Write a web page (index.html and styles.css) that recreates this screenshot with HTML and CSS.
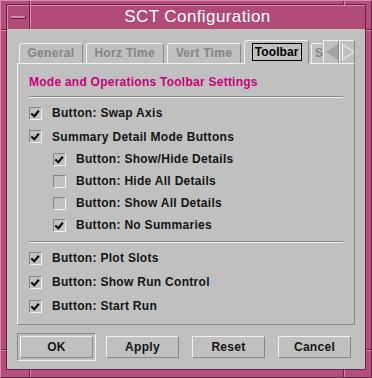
FILE: index.html
```html
<!DOCTYPE html>
<html lang="en">

<head>
    <meta charset="UTF-8">
    <title>SCT Configuration</title>
    <link rel="stylesheet" href="styles.css">
</head>

<body>
    <div class="window">
        <span class="tick top t-left"></span>
        <span class="tick top t-right"></span>
        <span class="tick bottom t-left"></span>
        <span class="tick bottom t-right"></span>
        <span class="tick side s-left s-up"></span>
        <span class="tick side s-left s-down"></span>
        <span class="tick side s-right s-up"></span>
        <span class="tick side s-right s-down"></span>

        <div class="titlebar">
            <div class="menu-btn"><span class="dash"></span></div>
            <div class="title">SCT Configuration</div>
        </div>
        <div class="client">
            <div class="tabs">
                <div class="tab t-general">General</div>
                <div class="tab t-horz">Horz Time</div>
                <div class="tab t-vert">Vert Time</div>
                <div class="tab active"><span class="focus">Toolbar</span></div>
                <div class="tab cut">S</div>
                <div class="scroll">
                    <span class="arrow">
                        <svg width="16" height="22" viewBox="0 0 16 22"><polygon points="14,3 2,11 14,19" fill="#a3a3a3" /></svg>
                    </span>
                    <span class="arrow">
                        <svg width="16" height="22" viewBox="0 0 16 22"><polyline points="2,3 14,11 2,19" fill="none" stroke="#f2f2f2" stroke-width="1" /><line x1="2.5" y1="3" x2="2.5" y2="19" stroke="#f2f2f2" /></svg>
                    </span>
                </div>
            </div>

            <div class="panel">
                <div class="heading">Mode and Operations Toolbar Settings</div>
                <div class="sep"></div>

                <div class="row first"><span class="box on"></span>Button: Swap Axis</div>
                <div class="row second"><span class="box on"></span>Summary Detail Mode Buttons</div>
                <div class="row sub"><span class="box on"></span>Button: Show/Hide Details</div>
                <div class="row sub"><span class="box"></span>Button: Hide All Details</div>
                <div class="row sub"><span class="box"></span>Button: Show All Details</div>
                <div class="row sub"><span class="box on"></span>Button: No Summaries</div>

                <div class="sep lower"></div>

                <div class="row tall first-low"><span class="box on"></span>Button: Plot Slots</div>
                <div class="row tall"><span class="box on"></span>Button: Show Run Control</div>
                <div class="row tall"><span class="box on"></span>Button: Start Run</div>
            </div>

            <div class="buttons">
                <div class="default-ring"><div class="btn">OK</div></div>
                <div class="btn">Apply</div>
                <div class="btn">Reset</div>
                <div class="btn">Cancel</div>
            </div>
        </div>
    </div>
</body>

</html>
```

FILE: styles.css
```css
body {
    margin: 0;
    font-family: 'Liberation Sans', Arial, sans-serif;
    background: #b44f7b;
}

.window {
    width: 372px;
    height: 378px;
    box-sizing: border-box;
    background: #b44f7b;
    border-top: 1px solid #d88aab;
    border-left: 1px solid #d88aab;
    border-right: 1px solid #6a2443;
    border-bottom: 1px solid #6a2443;
    padding: 3px 5px 7px 5px;
    display: flex;
    flex-direction: column;
    position: relative;
}

/* resize handle marks on the frame */
.tick {
    position: absolute;
    background: #6a2443;
}

.tick.top,
.tick.bottom {
    width: 1px;
    height: 4px;
    box-shadow: 1px 0 0 #d88aab;
}

.tick.top {
    top: 0;
}

.tick.bottom {
    bottom: 0;
    height: 7px;
}

.tick.t-left {
    left: 28px;
}

.tick.t-right {
    left: 342px;
}

.tick.side {
    height: 1px;
    width: 5px;
    box-shadow: 0 1px 0 #d88aab;
}

.tick.s-left {
    left: 0;
}

.tick.s-right {
    right: 0;
}

.tick.s-up {
    top: 28px;
}

.tick.s-down {
    top: 348px;
}

/* title bar */
.titlebar {
    height: 24px;
    display: flex;
    border-top: 1px solid #6a2443;
    border-left: 1px solid #6a2443;
    border-right: 1px solid #6a2443;
    background: #b04a76;
}

.menu-btn {
    width: 22px;
    border-right: 1px solid #6a2443;
    box-shadow: inset 1px 1px 0 #d88aab;
    display: flex;
    align-items: center;
    justify-content: center;
}

.menu-btn .dash {
    width: 14px;
    height: 2px;
    background: #d88aab;
    border-bottom: 1px solid #5a1c38;
    border-right: 1px solid #5a1c38;
}

.title {
    flex: 1;
    color: #fff;
    font-size: 17px;
    text-align: center;
    line-height: 24px;
    letter-spacing: 0.4px;
    box-shadow: inset 1px 1px 0 #d88aab;
}

/* client area */
.client {
    flex: 1;
    background: #c0c0c0;
    border: 1px solid #6a2443;
    border-top: none;
    padding: 11px 10px 0 10px;
    display: flex;
    flex-direction: column;
}

.tabs {
    display: flex;
    align-items: flex-end;
    height: 23px;
    padding-left: 2px;
    position: relative;
    z-index: 1;
}

.tab {
    height: 20px;
    box-sizing: border-box;
    border-top: 1px solid #f0f0f0;
    border-left: 1px solid #f0f0f0;
    border-right: 1px solid #888;
    border-radius: 3px 3px 0 0;
    font-size: 12px;
    font-weight: bold;
    color: #858585;
    line-height: 19px;
    letter-spacing: 0.3px;
    margin-right: 3px;
    text-align: center;
}

.t-general {
    width: 64px;
}

.t-horz {
    width: 78px;
}

.t-vert {
    width: 75px;
}

.tab.active {
    height: 24px;
    width: 65px;
    color: #000;
    background: #c0c0c0;
    padding-top: 2px;
    margin-bottom: -1px;
    margin-right: 2px;
    letter-spacing: 0.1px;
}

.focus {
    display: inline-block;
    border: 1px solid #000;
    padding: 0 2px;
    line-height: 16px;
}

.tab.cut {
    width: 12px;
    overflow: hidden;
    text-align: left;
    padding-left: 3px;
    margin-right: 0;
    border-right: none;
    border-radius: 3px 0 0 0;
}

.scroll {
    display: flex;
    height: 23px;
    align-self: flex-end;
}

.arrow {
    width: 16px;
    height: 23px;
    box-sizing: border-box;
    border-top: 1px solid #f0f0f0;
    border-left: 1px solid #f0f0f0;
    border-right: 1px solid #888;
    display: block;
}

.arrow svg {
    display: block;
}

/* panel */
.panel {
    height: 262px;
    box-sizing: border-box;
    border-top: 1px solid #f0f0f0;
    border-left: 1px solid #f0f0f0;
    border-right: 1px solid #888;
    border-bottom: 1px solid #888;
    padding: 11px 11px 0 11px;
}

.heading {
    color: #c8007d;
    font-size: 12px;
    font-weight: bold;
    line-height: 14px;
    letter-spacing: 0.25px;
}

.sep {
    height: 0;
    border-top: 1px solid #888;
    border-bottom: 1px solid #f0f0f0;
    margin-top: 7px;
}

.sep.lower {
    margin-top: 5px;
}

.row {
    height: 22px;
    display: flex;
    align-items: center;
    font-size: 12px;
    font-weight: bold;
    color: #141414;
    letter-spacing: 0.3px;
}

.row.first {
    margin-top: 3px;
    height: 24px;
}

.row.second {
    height: 23px;
}

.row.sub {
    padding-left: 24px;
}

.row.tall {
    height: 24px;
}

.row.first-low {
    margin-top: 3px;
}

.box {
    width: 13px;
    height: 13px;
    box-sizing: border-box;
    border-top: 1px solid #858585;
    border-left: 1px solid #858585;
    border-right: 1px solid #f2f2f2;
    border-bottom: 1px solid #f2f2f2;
    margin-right: 10px;
    flex: none;
    position: relative;
}

.box.on::after {
    content: "";
    position: absolute;
    left: 2px;
    top: 1px;
    width: 3px;
    height: 6px;
    border-right: 2px solid #000;
    border-bottom: 2px solid #000;
    transform: rotate(40deg);
    transform-origin: 60% 60%;
}

/* buttons */
.buttons {
    display: flex;
    align-items: center;
    margin-top: 8px;
    gap: 10px;
}

.default-ring {
    padding: 2px;
    border-top: 1px solid #888;
    border-left: 1px solid #888;
    border-right: 1px solid #f0f0f0;
    border-bottom: 1px solid #f0f0f0;
}

.btn {
    width: 73px;
    height: 22px;
    box-sizing: border-box;
    border-top: 1px solid #f0f0f0;
    border-left: 1px solid #f0f0f0;
    border-right: 1px solid #888;
    border-bottom: 1px solid #888;
    font-size: 12px;
    font-weight: bold;
    color: #141414;
    text-align: center;
    line-height: 20px;
    letter-spacing: 0.3px;
}

.buttons>.btn {
    margin-left: 3px;
}

.buttons>.default-ring+.btn {
    margin-left: 0;
}
```
